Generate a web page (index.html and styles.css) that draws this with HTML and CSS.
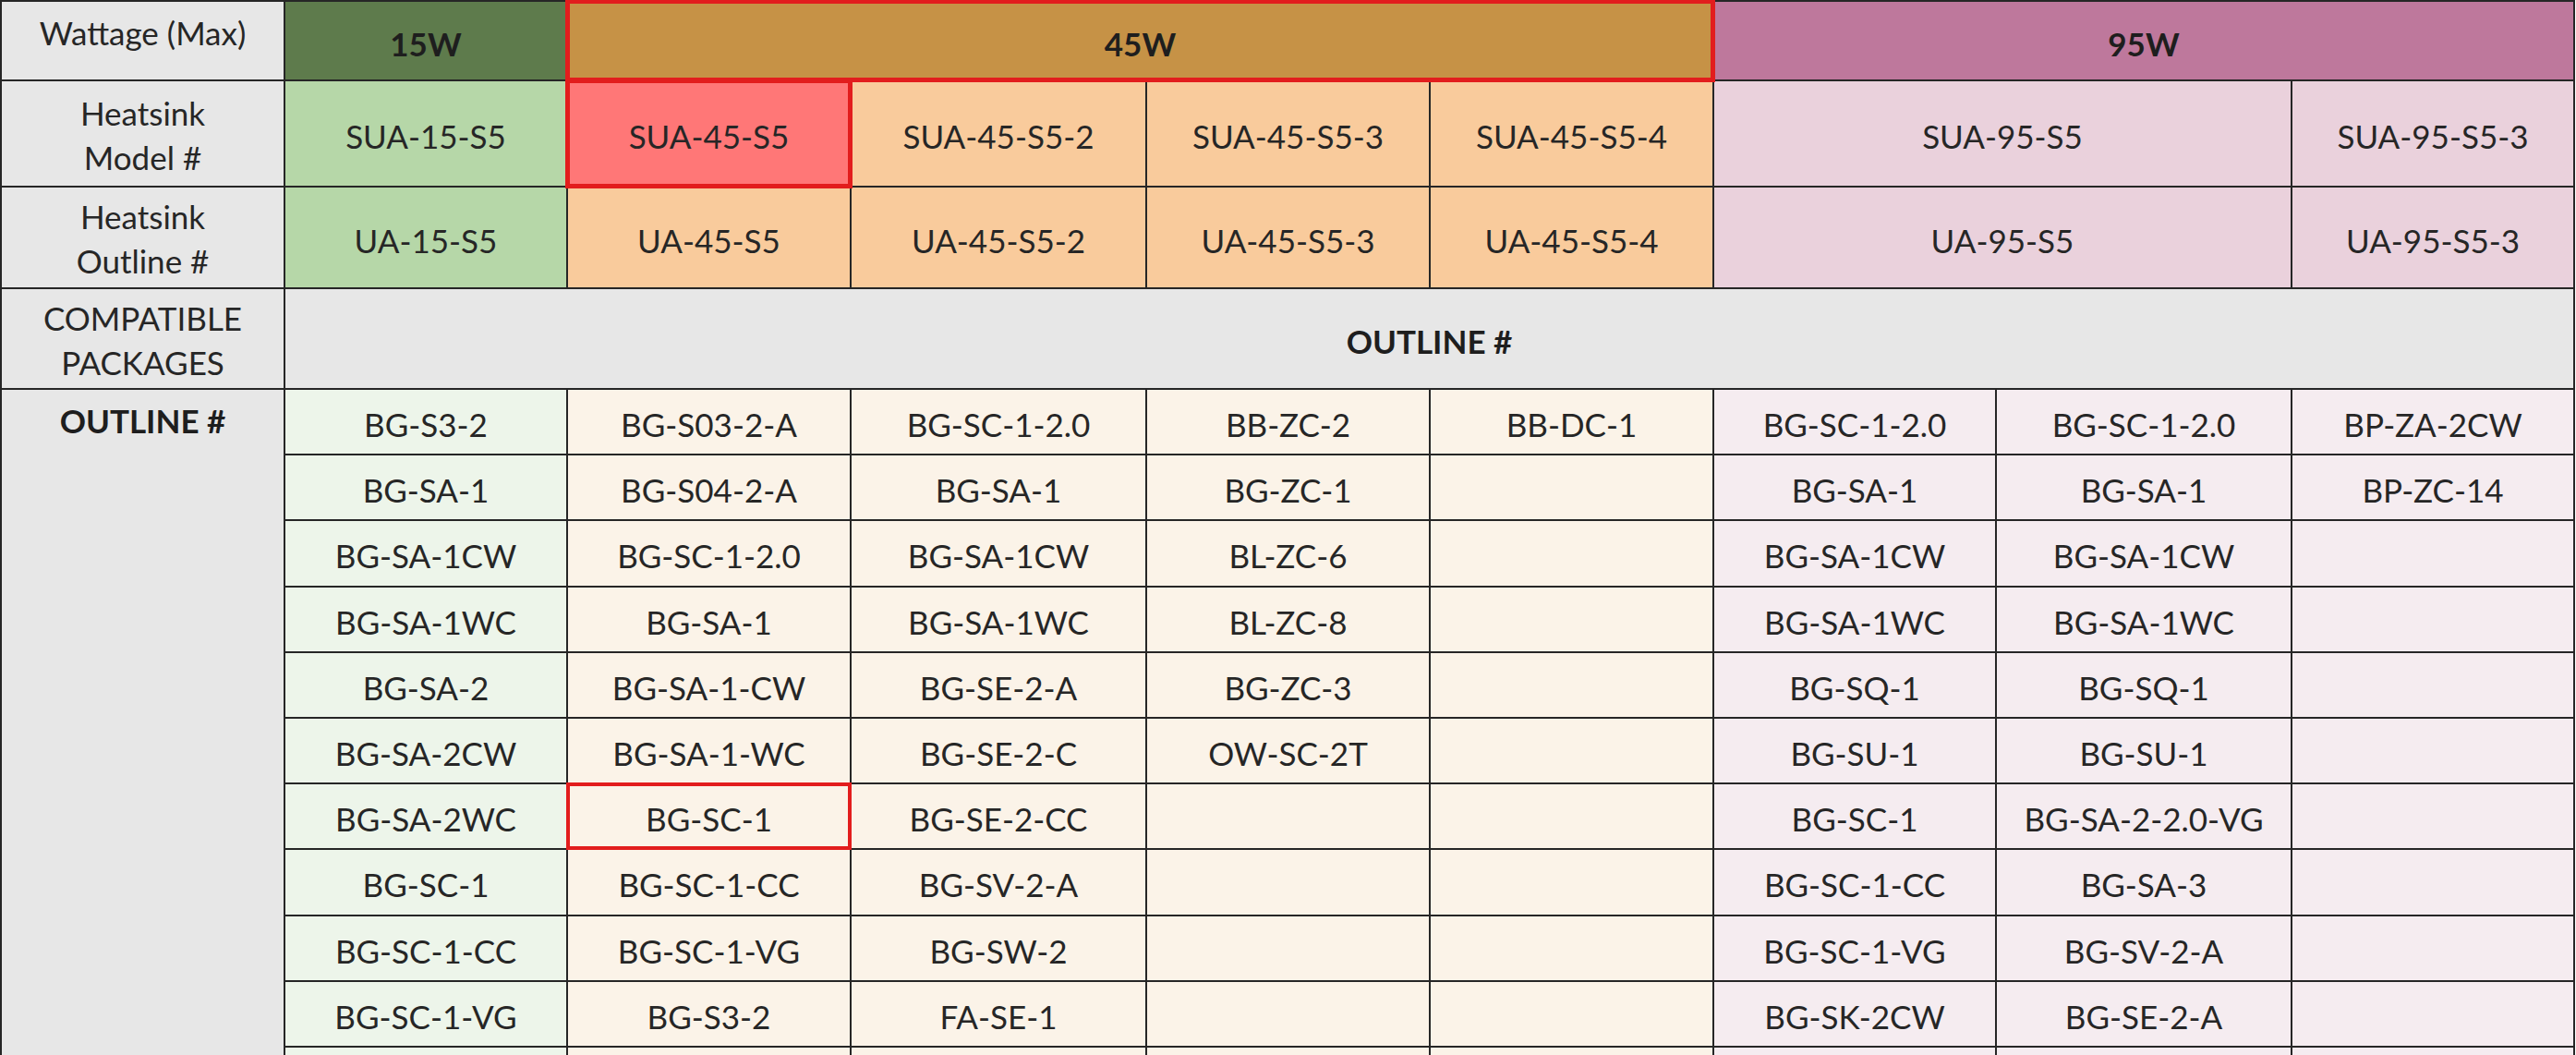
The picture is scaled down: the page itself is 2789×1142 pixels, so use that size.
FILE: index.html
```html
<!DOCTYPE html>
<html>
<head>
<meta charset="utf-8">
<title>Heatsink compatibility</title>
<link rel="stylesheet" href="styles.css">
</head>
<body>
<div class="sheet">
  <div class="c lbl top">Wattage (Max)</div>
  <div class="c w15 hd">15W</div>
  <div class="c w45 hd span4 sel">45W</div>
  <div class="c w95 hd span3">95W</div>

  <div class="c lbl two">Heatsink<br>Model #</div>
  <div class="c m15 mdl">SUA-15-S5</div>
  <div class="c mred mdl sel">SUA-45-S5</div>
  <div class="c m45 mdl">SUA-45-S5-2</div>
  <div class="c m45 mdl">SUA-45-S5-3</div>
  <div class="c m45 mdl">SUA-45-S5-4</div>
  <div class="c m95 mdl span2">SUA-95-S5</div>
  <div class="c m95 mdl">SUA-95-S5-3</div>

  <div class="c lbl two">Heatsink<br>Outline #</div>
  <div class="c m15 mdl">UA-15-S5</div>
  <div class="c m45 mdl">UA-45-S5</div>
  <div class="c m45 mdl">UA-45-S5-2</div>
  <div class="c m45 mdl">UA-45-S5-3</div>
  <div class="c m45 mdl">UA-45-S5-4</div>
  <div class="c m95 mdl span2">UA-95-S5</div>
  <div class="c m95 mdl">UA-95-S5-3</div>

  <div class="c lbl two">COMPATIBLE<br>PACKAGES</div>
  <div class="c lbl bold span8">OUTLINE #</div>

  <div class="c lbl bold side">OUTLINE #</div>

  <div class="c g">BG-S3-2</div><div class="c o">BG-S03-2-A</div><div class="c o">BG-SC-1-2.0</div><div class="c o">BB-ZC-2</div><div class="c o">BB-DC-1</div><div class="c p">BG-SC-1-2.0</div><div class="c p">BG-SC-1-2.0</div><div class="c p">BP-ZA-2CW</div>
  <div class="c g">BG-SA-1</div><div class="c o">BG-S04-2-A</div><div class="c o">BG-SA-1</div><div class="c o">BG-ZC-1</div><div class="c o"></div><div class="c p">BG-SA-1</div><div class="c p">BG-SA-1</div><div class="c p">BP-ZC-14</div>
  <div class="c g">BG-SA-1CW</div><div class="c o">BG-SC-1-2.0</div><div class="c o">BG-SA-1CW</div><div class="c o">BL-ZC-6</div><div class="c o"></div><div class="c p">BG-SA-1CW</div><div class="c p">BG-SA-1CW</div><div class="c p"></div>
  <div class="c g">BG-SA-1WC</div><div class="c o">BG-SA-1</div><div class="c o">BG-SA-1WC</div><div class="c o">BL-ZC-8</div><div class="c o"></div><div class="c p">BG-SA-1WC</div><div class="c p">BG-SA-1WC</div><div class="c p"></div>
  <div class="c g">BG-SA-2</div><div class="c o">BG-SA-1-CW</div><div class="c o">BG-SE-2-A</div><div class="c o">BG-ZC-3</div><div class="c o"></div><div class="c p">BG-SQ-1</div><div class="c p">BG-SQ-1</div><div class="c p"></div>
  <div class="c g">BG-SA-2CW</div><div class="c o">BG-SA-1-WC</div><div class="c o">BG-SE-2-C</div><div class="c o">OW-SC-2T</div><div class="c o"></div><div class="c p">BG-SU-1</div><div class="c p">BG-SU-1</div><div class="c p"></div>
  <div class="c g">BG-SA-2WC</div><div class="c o sel thin">BG-SC-1</div><div class="c o">BG-SE-2-CC</div><div class="c o"></div><div class="c o"></div><div class="c p">BG-SC-1</div><div class="c p">BG-SA-2-2.0-VG</div><div class="c p"></div>
  <div class="c g">BG-SC-1</div><div class="c o">BG-SC-1-CC</div><div class="c o">BG-SV-2-A</div><div class="c o"></div><div class="c o"></div><div class="c p">BG-SC-1-CC</div><div class="c p">BG-SA-3</div><div class="c p"></div>
  <div class="c g">BG-SC-1-CC</div><div class="c o">BG-SC-1-VG</div><div class="c o">BG-SW-2</div><div class="c o"></div><div class="c o"></div><div class="c p">BG-SC-1-VG</div><div class="c p">BG-SV-2-A</div><div class="c p"></div>
  <div class="c g">BG-SC-1-VG</div><div class="c o">BG-S3-2</div><div class="c o">FA-SE-1</div><div class="c o"></div><div class="c o"></div><div class="c p">BG-SK-2CW</div><div class="c p">BG-SE-2-A</div><div class="c p"></div>
  <div class="c g"></div><div class="c o"></div><div class="c o"></div><div class="c o"></div><div class="c o"></div><div class="c p"></div><div class="c p"></div><div class="c p"></div>
</div>
</body>
</html>
```

FILE: styles.css
```css
html, body {
  margin: 0;
  padding: 0;
  overflow: hidden;
  background: #ffffff;
}

.sheet {
  display: grid;
  grid-template-columns: 305px 304px 305px 318px 305px 305px 304px 318px 304px;
  grid-template-rows: 84px 113px 108px 107px repeat(11, 69.2px);
  gap: 2px;
  padding: 2px;
  width: max-content;
  background: #262626;
  font-family: Lato, "Open Sans", sans-serif;
  font-size: 35px;
  font-weight: 400;
  color: #262626;
}

.c {
  display: flex;
  align-items: center;
  justify-content: center;
  text-align: center;
  line-height: 42px;
  padding-top: 5px;
  box-sizing: border-box;
  white-space: nowrap;
  position: relative;
}

.lbl { background: #e7e7e7; }
.top { align-items: flex-start; padding-top: 12px; }
.two { line-height: 48px; padding-top: 2px; }
.bold { font-weight: 700; color: #1e1e1e; }
.side {
  grid-column: 1;
  grid-row: 5 / span 11;
  align-items: flex-start;
  padding-top: 12px;
}
.hd { font-weight: 700; padding-top: 6px; color: #1e1e1e; }

.span2 { grid-column: span 2; }
.span3 { grid-column: span 3; }
.span4 { grid-column: span 4; }
.span8 { grid-column: span 8; }

.w15 { background: #5e7b4c; }
.w45 { background: #c69246; }
.w95 { background: #be789c; }

.m15 { background: #b6d7a8; }
.m45 { background: #f9cb9c; }
.m95 { background: #ead1dc; }
.mred { background: #ff7777; }

.g { background: #edf5ea; }
.o { background: #fbf3e8; }
.p { background: #f5ecf0; }

.sel {
  outline: 5px solid #e21d1d;
  outline-offset: -2px;
  z-index: 1;
}
.thin { outline-width: 4px; }
```
